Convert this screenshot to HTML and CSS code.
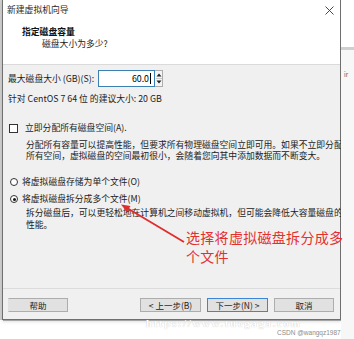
FILE: index.html
```html
<!DOCTYPE html>
<html lang="zh-CN">
<head>
<meta charset="utf-8">
<title>新建虚拟机向导</title>
<link rel="stylesheet" href="styles.css">
</head>
<body>
<div class="screen">
  <div class="edge-left"></div>
  <div class="dialog">
    <div class="titlebar">
      <span class="title">新建虚拟机向导</span>
      <svg class="close" width="9" height="9" viewBox="0 0 9 9"><path d="M0.5 0.5 L8.5 8.5 M8.5 0.5 L0.5 8.5" stroke="#333" stroke-width="0.9" fill="none"/></svg>
    </div>
    <div class="header">
      <div class="h-title">指定磁盘容量</div>
      <div class="h-sub">磁盘大小为多少?</div>
    </div>
    <div class="content">
      <div class="size-row">
        <span class="size-label">最大磁盘大小 (GB)(S):</span>
        <span class="spin-field">60.0<span class="caret"></span></span>
        <span class="spin-btns">
          <svg width="6" height="15" viewBox="0 0 6 15"><path d="M0.5 5.5 L3 2.5 L5.5 5.5 Z M0.5 9.5 L3 12.5 L5.5 9.5 Z" fill="#222"/><path d="M0 7.5 H6" stroke="#c8c8c8" stroke-width="1"/></svg>
        </span>
      </div>
      <div class="hint">针对 CentOS 7 64 位 的建议大小: 20 GB</div>
      <div class="opt-row check-row"><span class="checkbox"></span><span>立即分配所有磁盘空间(A).</span></div>
      <div class="desc desc-a">分配所有容量可以提高性能，但要求所有物理磁盘空间立即可用。如果不立即分配<br>所有空间，虚拟磁盘的空间最初很小，会随着您向其中添加数据而不断变大。</div>
      <div class="opt-row radio-row r1"><span class="radio"></span><span>将虚拟磁盘存储为单个文件(O)</span></div>
      <div class="opt-row radio-row r2"><span class="radio on"></span><span>将虚拟磁盘拆分成多个文件(M)</span></div>
      <div class="desc desc-b">拆分磁盘后，可以更轻松地在计算机之间移动虚拟机，但可能会降低大容量磁盘的<br>性能。</div>
    </div>
    <div class="footer">
      <span class="btn help">帮助</span>
      <span class="btn back">&lt; 上一步(B)</span>
      <span class="btn next">下一步(N) &gt;</span>
      <span class="btn cancel">取消</span>
    </div>
  </div>
  <div class="edge-right"><span class="peek">ir</span></div>
</div>
<svg class="arrow" width="354" height="339" viewBox="0 0 354 339"><path d="M184 242 L127 208" stroke="#e02c2c" stroke-width="1.8" fill="none"/><polygon points="121,204.5 130.5,206.1 126.9,212.1" fill="#e02c2c"/></svg>
<div class="note">选择将虚拟磁盘拆分成多<br>个文件</div>
<div class="watermark">https://www.tuegaga.com</div>
<div class="csdn">CSDN @wangqz1987</div>
</body>
</html>
```
FILE: styles.css
```css
* { box-sizing: border-box; margin: 0; padding: 0; }
html, body { width: 354px; height: 339px; overflow: hidden; background: #fff; }
body {
  position: relative;
  font-family: "Noto Sans CJK SC", "Noto Sans", sans-serif;
  font-size: 8.8px;
  color: #1c1c1c;
}
.screen { display: flex; align-items: flex-start; height: 339px; }
.edge-left { width: 2px; height: 320px; background: #cfcfcf; }
.dialog {
  width: 339px;
  height: 320px;
  display: flex;
  flex-direction: column;
  background: #f0f0f0;
  border: 1px solid #6f6f6f;
  border-top: none;
  box-shadow: 1px 1px 0 #a5a5a5, 0 2px 3px rgba(0,0,0,0.12);
}
.titlebar {
  height: 20px;
  background: #fff;
  display: flex;
  align-items: center;
  justify-content: space-between;
  padding: 0 6px 0 4px;
}
.title { line-height: 20px; color: #2a2a2a; }
.close { display: block; }
.header {
  height: 45px;
  background: #fff;
  border-bottom: 1px solid #dadada;
  padding: 6px 0 0 19px;
}
.h-title { font-weight: bold; line-height: 12px; color: #111; }
.h-sub { line-height: 12px; padding-left: 20px; color: #222; }
.content { padding: 5px 0 0 5px; }
.size-row { display: flex; align-items: center; height: 17px; }
.size-label { width: 90px; line-height: 12px; }
.spin-field {
  width: 57px;
  height: 17px;
  background: #fff;
  border: 1px solid #3c7fb1;
  text-align: right;
  line-height: 15px;
  padding-right: 3px;
  color: #000;
  display: flex;
  justify-content: flex-end;
  align-items: center;
}
.caret { display: inline-block; width: 1px; height: 11px; background: #000; margin-left: 1px; }
.spin-btns {
  width: 8px;
  height: 17px;
  border: 1px solid #adadad;
  border-left: none;
  background: #f4f4f4;
  display: flex;
  justify-content: center;
}
.spin-btns svg { display: block; }
.hint { margin-top: 6px; line-height: 12px; }
.opt-row { display: flex; align-items: center; height: 12px; line-height: 12px; }
.check-row { margin-top: 17px; }
.checkbox {
  width: 9px; height: 9px;
  margin: 0 7px 0 1px;
  background: #fff;
  border: 1px solid #333;
}
.desc { padding-left: 18px; white-space: nowrap; color: #222; }
.desc-a { margin-top: 4.5px; line-height: 11.5px; }
.r1 { margin-top: 14.5px; }
.r2 { margin-top: 5px; }
.radio {
  width: 8px; height: 8px;
  margin: 0 4px 0 2px;
  border-radius: 50%;
  border: 1px solid #333;
  background: #fff;
  position: relative;
}
.radio.on::after {
  content: "";
  position: absolute;
  left: 1.5px; top: 1.5px;
  width: 3px; height: 3px;
  border-radius: 50%;
  background: #111;
}
.desc-b { margin-top: 2px; line-height: 12px; }
.footer {
  margin-top: auto;
  height: 31px;
  border-top: 1px solid #dcdcdc;
  padding: 9px 6px 7px 5px;
  display: flex;
}
.btn {
  height: 14px;
  width: 61px;
  background: #e1e1e1;
  border: 1px solid #adadad;
  text-align: center;
  line-height: 12px;
  font-size: 8.5px;
  color: #222;
}
.help { width: 60px; margin-right: auto; border-left-color: #e1e1e1; }
.back { margin-right: 6px; }
.next { margin-right: 6px; border-color: #3b86d6; }
.cancel { width: 60px; }
.edge-right { flex: 1; height: 339px; background: #f7f7f7; border-top: 47px solid #fff; padding: 20px 0 0 3px; box-shadow: inset 0 3px 0 #cfcfcf; }
.peek { font-size: 6px; line-height: 8px; color: #555; }
.arrow { position: absolute; left: 0; top: 0; pointer-events: none; }
.note {
  position: absolute;
  left: 186px;
  top: 228px;
  font-size: 14px;
  line-height: 19px;
  letter-spacing: 0.3px;
  color: #e3302e;
  white-space: nowrap;
}
.watermark {
  position: absolute;
  left: 146px;
  top: 318px;
  height: 10px;
  font-family: "Liberation Serif", serif;
  font-weight: bold;
  font-size: 11px;
  line-height: 10px;
  letter-spacing: 1.6px;
  color: #fff;
  text-shadow: 0 0 1px #b8b8b8;
  white-space: nowrap;
}
.csdn {
  position: absolute;
  left: 277px;
  top: 329px;
  font-family: "Liberation Sans", sans-serif;
  font-size: 6.5px;
  line-height: 8px;
  color: #8c8c8c;
  white-space: nowrap;
}
```
